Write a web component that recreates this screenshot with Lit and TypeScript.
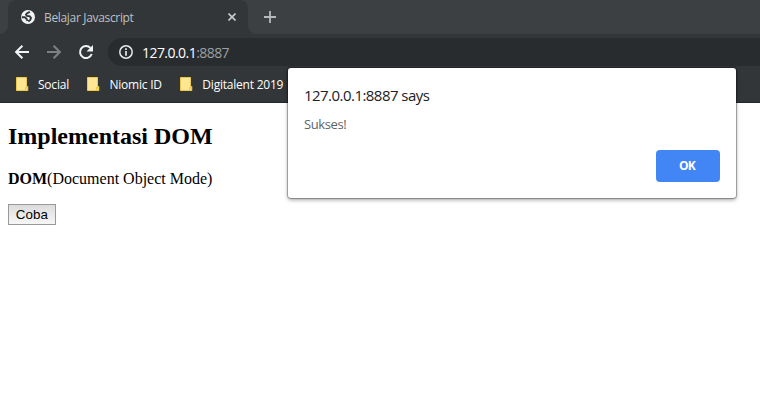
import { LitElement, html, css } from "lit";
import { customElement } from "lit/decorators.js";

const folder = html`<svg class="folder" width="13" height="14" viewBox="0 0 13 14">
  <path d="M.5.5h10v9h1.3v4H.5z" fill="#ffe694" stroke="#ecc94b"/>
  <path d="M9.5 10.5h2v3h-2z" fill="#ffdf70" stroke="#ecc94b"/>
</svg>`;

@customElement("app-root")
export class AppRoot extends LitElement {
  static styles = css`
    :host { display: block; position: relative; width: 760px; height: 416px; overflow: hidden; background: #fff; font-family: "Open Sans", "Noto Sans", sans-serif; }
    * { box-sizing: border-box; }
    svg { display: block; flex: none; }
    .strip { height: 34px; background: #3c4043; display: flex; padding-left: 8px; }
    .tab { position: relative; width: 240px; height: 34px; background: #323639; border-radius: 8px 8px 0 0; display: flex; align-items: center; padding: 0 12px 0 12px; color: #bdc1c6; }
    .tab::before, .tab::after { content: ""; position: absolute; bottom: 0; width: 8px; height: 8px; }
    .tab::before { left: -8px; background: radial-gradient(circle at 0 0, transparent 7.5px, #323639 8px); }
    .tab::after { right: -8px; background: radial-gradient(circle at 100% 0, transparent 7.5px, #323639 8px); }
    .title { font-size: 12px; letter-spacing: -0.33px; margin-left: 8px; flex: 1; white-space: nowrap; }
    .plus { margin: 11px 0 0 16px; }
    .toolbar { height: 36px; background: #323639; display: flex; align-items: center; padding-left: 14px; }
    .fwd { margin-left: 16px; }
    .reload { margin-left: 16px; }
    .omni { flex: 1; margin-left: 14px; height: 28px; background: #282c2f; border-radius: 14px 0 0 14px; display: flex; align-items: center; padding-left: 11px; color: #9aa0a6; font-size: 14px; }
    .url { margin-left: 9px; letter-spacing: -0.55px; white-space: nowrap; }
    .host { color: #fff; }
    .bookmarks { height: 33px; background: #323639; border-bottom: 1px solid #24272a; display: flex; align-items: center; padding: 0 0 4px 16px; font-size: 12px; color: #fff; }
    .mark { display: flex; align-items: center; margin-right: 18.5px; white-space: nowrap; }
    .mark span { margin-left: 9px; letter-spacing: -0.22px; }
    .page { padding: 20px 8px; font-family: "Liberation Serif", serif; color: #000; }
    h2 { font-size: 24px; line-height: 27px; margin: 0 0 20px; }
    p { font-size: 16px; line-height: 18px; margin: 0 0 16px; }
    .coba { display: block; width: 48px; height: 21px; padding: 0; border: 1px solid #999; border-radius: 0; background: linear-gradient(#dcdcdc, #f6f6f6); font: 13.333px/19px "Liberation Sans", sans-serif; color: #000; letter-spacing: .1px; }
    .dialog { position: absolute; left: 288px; top: 68px; width: 448px; height: 130px; background: #fff; border-radius: 3px; box-shadow: 0 0 1px 1px rgba(0,0,0,.3), 0 2px 4px rgba(0,0,0,.35); padding: 16px; display: flex; flex-direction: column; }
    .says { font-size: 15px; line-height: 22px; color: #202124; letter-spacing: -0.54px; }
    .msg { font-size: 13px; line-height: 18px; margin-top: 9px; color: #5f6368; letter-spacing: -0.4px; }
    .ok { align-self: flex-end; margin-top: auto; width: 64px; height: 32px; border: 0; padding: 0 2px 2px 0; border-radius: 4px; background: #4285f4; color: #fff; font: 700 12px "Open Sans", sans-serif; letter-spacing: -0.7px; }
  `;

  render() {
    return html`
      <div class="strip">
        <div class="tab">
          <svg width="16" height="16" viewBox="0 0 16 16"><circle cx="8" cy="8" r="7" fill="#f1f3f4"/><path d="M9.8 2.8L7.2 4.2 6 5.6l.9 1.3 2.6.3 1.3 1.3M1.8 8.2l3 .1 1.7 1.5 1 2.1M11.4 8.2L10.2 11l-1.9 1.5" fill="none" stroke="#323639" stroke-width="1.9"/></svg>
          <span class="title">Belajar Javascript</span>
          <svg width="8" height="8" viewBox="0 0 8 8"><path d="M.5.5l7 7m0-7l-7 7" stroke="#c8cbce" stroke-width="1.6"/></svg>
        </div>
        <svg class="plus" width="12" height="12" viewBox="0 0 12 12"><path d="M6 0v12M0 6h12" stroke="#b6b9bd" stroke-width="1.8"/></svg>
      </div>
      <div class="toolbar">
        <svg width="16" height="16" viewBox="0 0 16 16"><path d="M15 8H2.3M8.4 1.7L2.1 8l6.3 6.3" fill="none" stroke="#f1f3f4" stroke-width="2"/></svg>
        <svg class="fwd" width="16" height="16" viewBox="0 0 16 16"><path d="M1 8h12.7M7.6 1.7L13.9 8l-6.3 6.3" fill="none" stroke="#7d8083" stroke-width="2"/></svg>
        <svg class="reload" width="16" height="16" viewBox="0 0 16 16"><path d="M13.7 10a6 6 0 1 1-1.3-6.1" fill="none" stroke="#f1f3f4" stroke-width="2"/><path d="M15 1v6.5H8.5z" fill="#f1f3f4"/></svg>
        <div class="omni">
          <svg width="14" height="14" viewBox="0 0 14 14"><circle cx="7" cy="7" r="6.2" fill="none" stroke="#e8eaed" stroke-width="1.5"/><path d="M7 3.2v1.7M7 6.1v4.6" stroke="#e8eaed" stroke-width="1.7"/></svg>
          <span class="url"><span class="host">127.0.0.1</span>:8887</span>
        </div>
      </div>
      <div class="bookmarks">
        ${["Social", "Niomic ID", "Digitalent 2019"].map((t) => html`<div class="mark">${folder}<span>${t}</span></div>`)}
      </div>
      <div class="page">
        <h2>Implementasi DOM</h2>
        <p><b>DOM</b>(Document Object Mode)</p>
        <button class="coba">Coba</button>
      </div>
      <div class="dialog">
        <div class="says">127.0.0.1:8887 says</div>
        <div class="msg">Sukses!</div>
        <button class="ok">OK</button>
      </div>`;
  }
}
